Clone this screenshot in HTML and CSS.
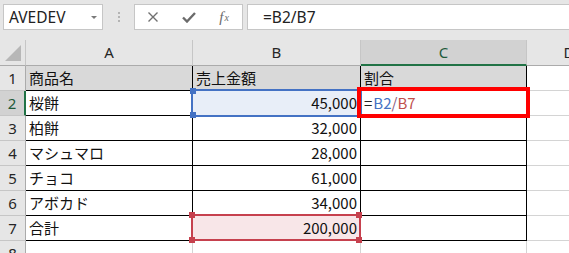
FILE: index.html
```html
<!DOCTYPE html>
<html lang="ja">
<head>
<meta charset="utf-8">
<title>Excel</title>
<link rel="stylesheet" href="styles.css">
</head>
<body>
<div class="toolbar">
  <div class="namebox"><span>AVEDEV</span><span class="caret"></span></div>
  <div class="grip"><i></i><i></i><i></i></div>
  <div class="fxbox">
    <span class="slot"><svg width="12" height="12" viewBox="0 0 12 12"><path d="M1.5 1.5L10.5 10.5M10.5 1.5L1.5 10.5" stroke="#707070" stroke-width="1.4" fill="none"/></svg></span>
    <span class="slot"><svg width="14" height="11" viewBox="0 0 14 11"><path d="M1 5.5L5 9.5L13 1" stroke="#6b6b6b" stroke-width="2.4" fill="none"/></svg></span>
    <span class="slot fx"><i>f</i><sub>x</sub></span>
  </div>
  <div class="formula">=B2/B7</div>
</div>
<div class="sheet">
  <div class="corner"><svg width="25" height="25" viewBox="0 0 25 25"><polygon points="21,5 21,21 5,21" fill="#b7b7b7"/></svg></div>
  <div class="ch">A</div>
  <div class="ch">B</div>
  <div class="ch ch-sel">C</div>
  <div class="ch ch-d">D</div>

  <div class="rh">1</div>
  <div class="c t hd">商品名</div>
  <div class="c t hd">売上金額</div>
  <div class="c t hd">割合</div>
  <div class="c d"></div>

  <div class="rh rh-sel">2</div>
  <div class="c t">桜餅</div>
  <div class="c t num blue">45,000</div>
  <div class="c t"><span class="eq">=</span><span class="r1">B2</span><span class="sl">/</span><span class="r2">B7</span></div>
  <div class="c d"></div>

  <div class="rh">3</div>
  <div class="c t">柏餅</div>
  <div class="c t num">32,000</div>
  <div class="c t"></div>
  <div class="c d"></div>

  <div class="rh">4</div>
  <div class="c t">マシュマロ</div>
  <div class="c t num">28,000</div>
  <div class="c t"></div>
  <div class="c d"></div>

  <div class="rh">5</div>
  <div class="c t">チョコ</div>
  <div class="c t num">61,000</div>
  <div class="c t"></div>
  <div class="c d"></div>

  <div class="rh">6</div>
  <div class="c t">アボカド</div>
  <div class="c t num">34,000</div>
  <div class="c t"></div>
  <div class="c d"></div>

  <div class="rh">7</div>
  <div class="c t">合計</div>
  <div class="c t num pink">200,000</div>
  <div class="c t"></div>
  <div class="c d"></div>

  <div class="rh">8</div>
  <div class="c"></div>
  <div class="c"></div>
  <div class="c"></div>
  <div class="c d"></div>

  <div class="sel-blue"></div>
  <div class="hb hb1"></div>
  <div class="hb hb2"></div>
  <div class="active-green"></div>
  <div class="red-box"></div>
  <div class="sel-pink"></div>
  <div class="hp hp1"></div>
  <div class="hp hp2"></div>
  <div class="hp hp3"></div>
  <div class="hp hp4"></div>
</div>
</body>
</html>
```

FILE: styles.css
```css
html, body {
  margin: 0;
  padding: 0;
  background: #fff;
  overflow: hidden;
}
body {
  width: 569px;
  height: 253px;
  font-family: "Noto Sans", "Noto Sans CJK JP", sans-serif;
}

.toolbar {
  height: 40px;
  box-sizing: border-box;
  background: #e6e6e6;
  display: flex;
  align-items: flex-start;
  padding: 4px 0 0 3px;
}
.namebox {
  width: 100px;
  height: 26px;
  box-sizing: border-box;
  border: 1px solid #c6c6c6;
  background: #fff;
  display: flex;
  align-items: center;
  justify-content: space-between;
  padding: 0 5px 0 5px;
  font-size: 15.5px;
  color: #222;
}
.caret {
  width: 0;
  height: 0;
  border-left: 3.5px solid transparent;
  border-right: 3.5px solid transparent;
  border-top: 3.5px solid #7a7a7a;
  margin-top: 1px;
}
.grip {
  width: 31px;
  height: 26px;
  display: flex;
  flex-direction: column;
  align-items: center;
  justify-content: center;
  gap: 2px;
}
.grip i {
  display: block;
  width: 2px;
  height: 2px;
  background: #b4b4b4;
}
.fxbox {
  width: 109px;
  height: 26px;
  box-sizing: border-box;
  border: 1px solid #c6c6c6;
  background: #fff;
  display: flex;
  align-items: center;
}
.slot {
  width: 36px;
  height: 24px;
  display: flex;
  align-items: center;
  justify-content: center;
}
.fx {
  font-family: "Liberation Serif", serif;
  font-style: italic;
  color: #6b6b6b;
  font-size: 15px;
}
.fx i {
  font-style: italic;
}
.fx sub {
  font-size: 10px;
  vertical-align: -1px;
  margin-left: 1px;
}
.formula {
  flex: 1;
  margin-left: 4px;
  margin-right: -2px;
  height: 26px;
  box-sizing: border-box;
  border: 1px solid #c6c6c6;
  background: #fff;
  padding-left: 15px;
  font-size: 15.5px;
  line-height: 24px;
  color: #222;
}

.sheet {
  position: relative;
  display: grid;
  grid-template-columns: 26px 167px 168px 166px 84px;
  grid-template-rows: 26px repeat(8, 25px);
  width: 611px;
}
.corner {
  background: #e6e6e6;
  border-right: 1px solid #c6c6c6;
  border-bottom: 1px solid #ababab;
  box-sizing: border-box;
}
.corner svg {
  display: block;
}
.ch {
  background: #e6e6e6;
  border-right: 1px solid #c6c6c6;
  border-bottom: 1px solid #ababab;
  box-sizing: border-box;
  text-align: center;
  font-size: 15px;
  line-height: 25px;
  color: #262626;
}
.ch-sel {
  background: #d2d2d2;
  border-bottom: 2px solid #217346;
  color: #1e5a3a;
}
.ch-d {
  border-right: none;
}
.rh {
  background: #e6e6e6;
  border-right: 1px solid #ababab;
  border-bottom: 1px solid #c6c6c6;
  box-sizing: border-box;
  text-align: center;
  font-size: 15px;
  line-height: 24px;
  color: #262626;
}
.rh-sel {
  background: #d2d2d2;
  border-right: 2px solid #217346;
  color: #1e5a3a;
}
.c {
  box-sizing: border-box;
  border-right: 1px solid #d4d4d4;
  border-bottom: 1px solid #d4d4d4;
  padding: 0 3px 0 3px;
  font-family: "Noto Sans CJK JP", sans-serif;
  font-size: 15px;
  line-height: 24px;
  color: #111;
  white-space: nowrap;
  overflow: hidden;
}
.c.t {
  border-right-color: #000;
  border-bottom-color: #000;
}
.c.d {
  border-right: none;
}
.hd {
  background: #d9d9d9;
}
.num {
  text-align: right;
}
.blue {
  background: #e8eef8;
}
.pink {
  background: #f8e6e8;
}
.eq {
  color: #222;
  margin-right: 1px;
}
.r1 {
  color: #4472c4;
}
.sl {
  color: #8a5a7a;
}
.r2 {
  color: #c0504d;
}

.sel-blue {
  position: absolute;
  left: 191px;
  top: 49px;
  width: 171px;
  height: 28px;
  box-sizing: border-box;
  border: 2px solid #4472c4;
}
.hb {
  position: absolute;
  width: 6px;
  height: 6px;
  background: #4472c4;
  left: 190px;
}
.hb1 { top: 48px; }
.hb2 { top: 72px; }
.active-green {
  position: absolute;
  left: 360px;
  top: 50px;
  width: 167px;
  height: 25px;
  box-sizing: border-box;
  border: 1px solid #217346;
}
.red-box {
  position: absolute;
  left: 357px;
  top: 47px;
  width: 173px;
  height: 31px;
  box-sizing: border-box;
  border: 4px solid #ff0000;
}
.sel-pink {
  position: absolute;
  left: 191px;
  top: 174px;
  width: 170px;
  height: 27px;
  box-sizing: border-box;
  border: 2px solid #c6414e;
}
.hp {
  position: absolute;
  width: 6px;
  height: 6px;
  background: #c6414e;
}
.hp1 { left: 189px; top: 172px; }
.hp2 { left: 356px; top: 172px; }
.hp3 { left: 189px; top: 197px; }
.hp4 { left: 356px; top: 197px; }
```
